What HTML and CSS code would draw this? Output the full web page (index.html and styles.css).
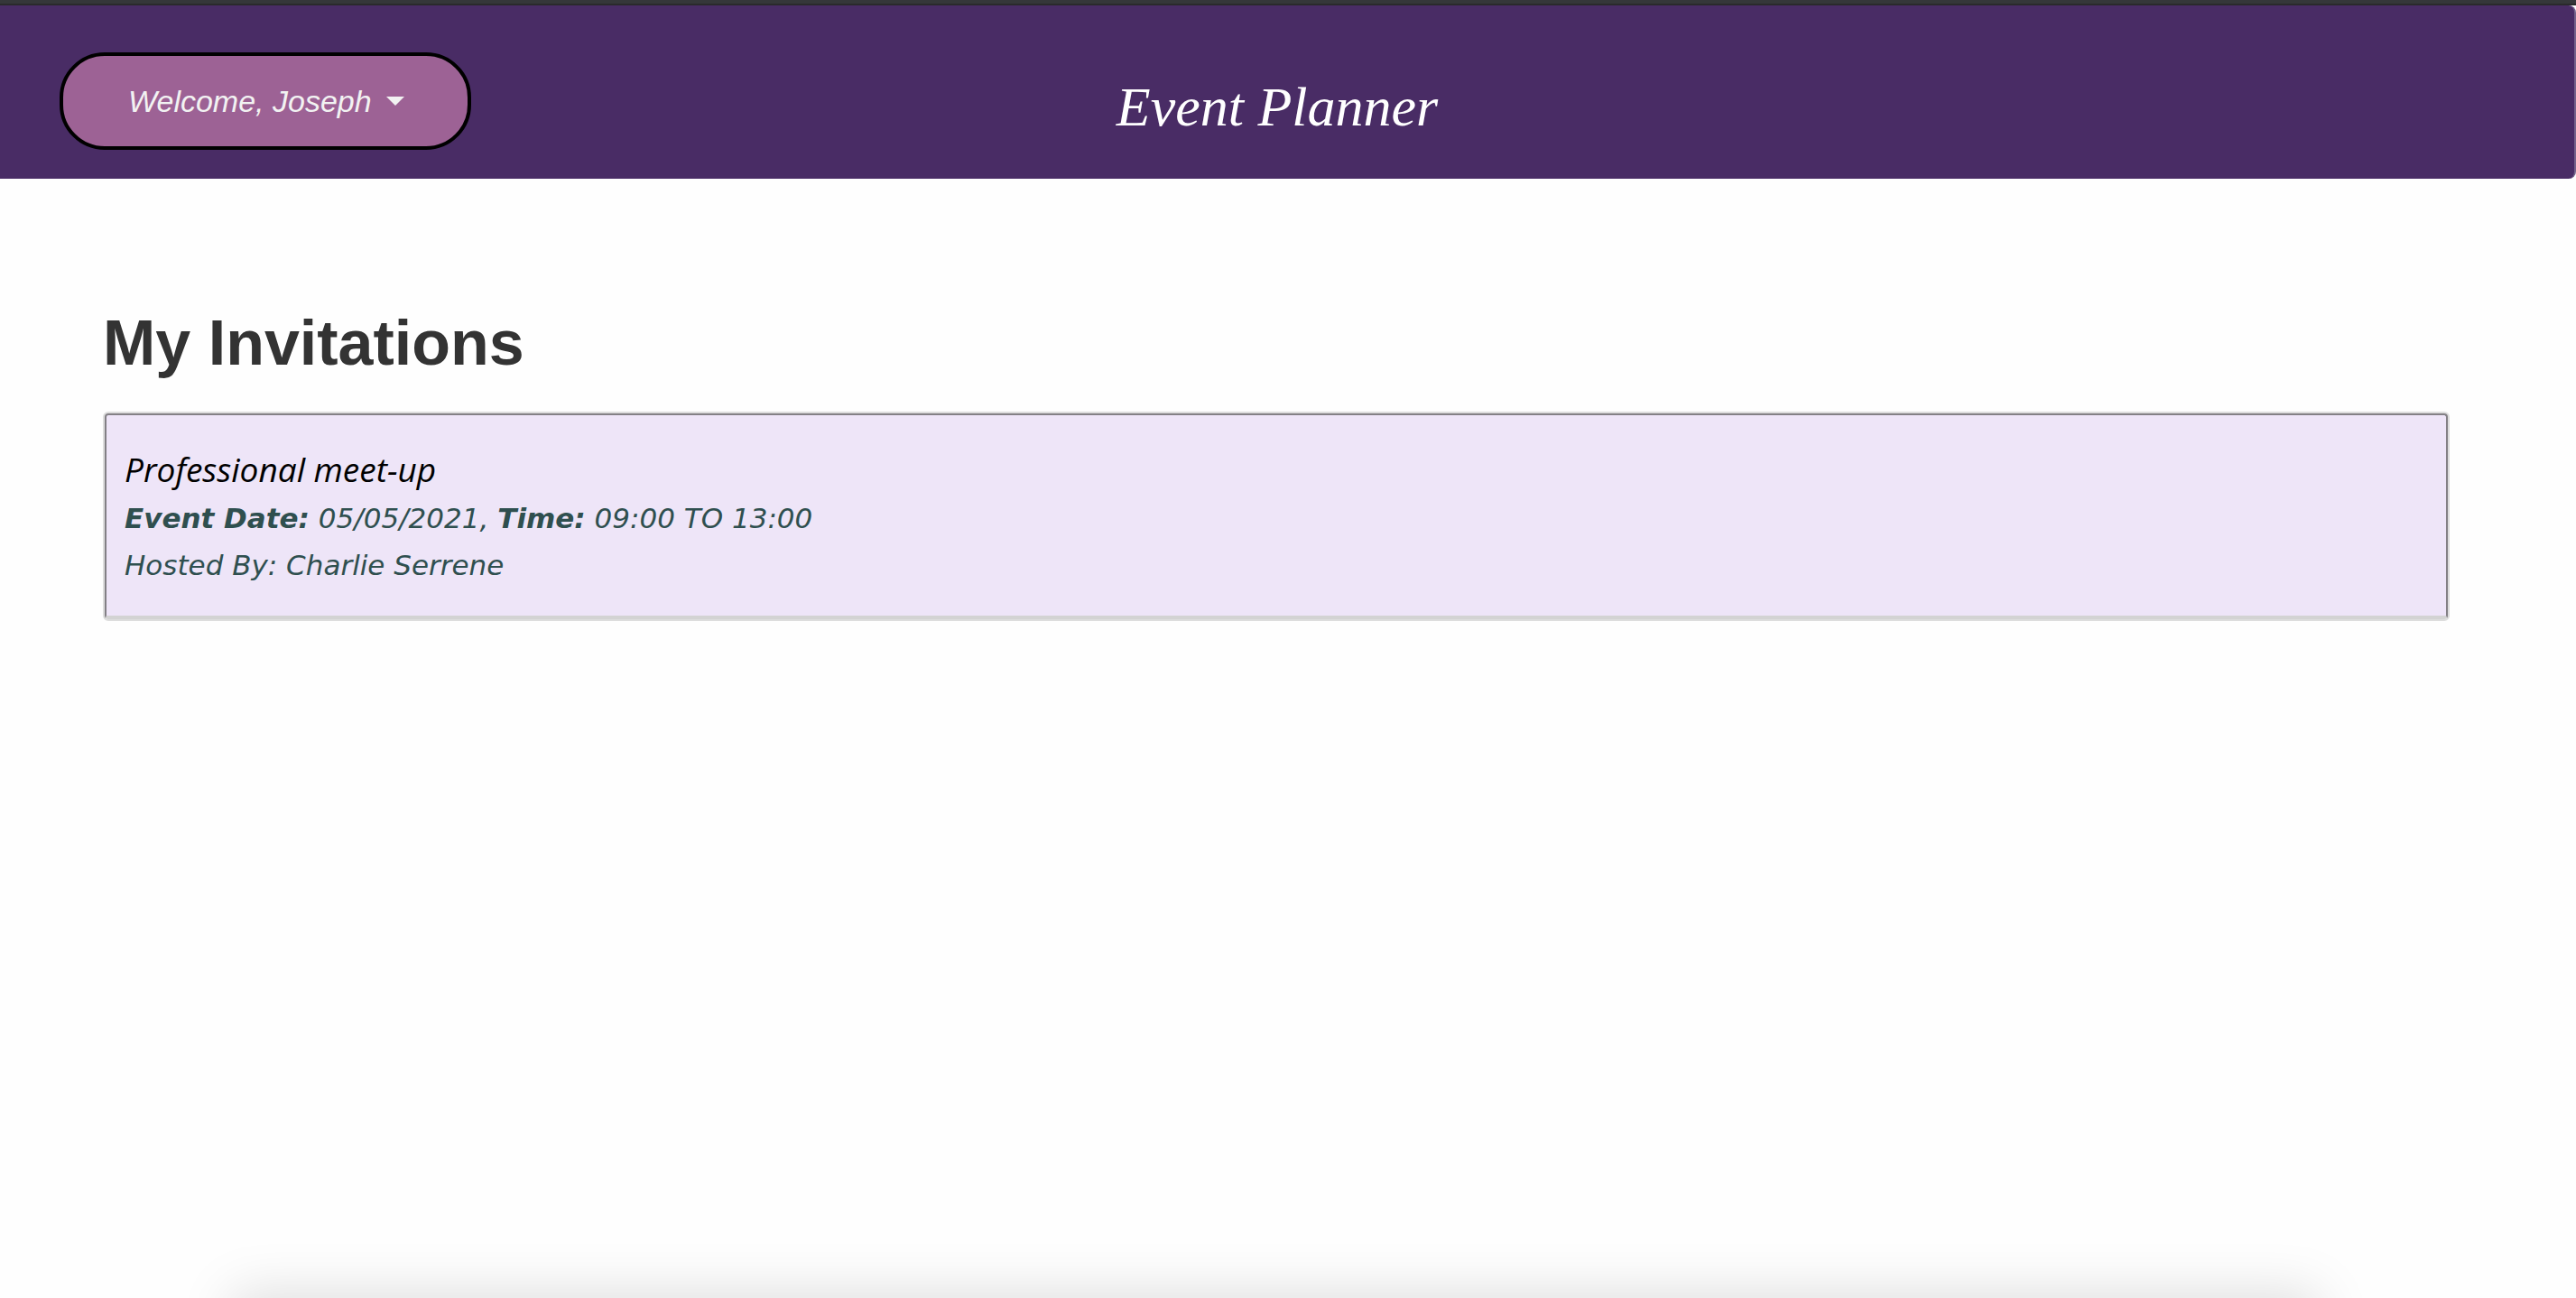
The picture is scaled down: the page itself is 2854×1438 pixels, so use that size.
FILE: index.html
```html
<!DOCTYPE html>
<html lang="en">
<head>
  <meta charset="utf-8">
  <title>Event Planner</title>
  <link rel="stylesheet" href="styles.css">
</head>
<body>
  <header class="navbar">
    <div class="navbar-start">
      <button class="user-menu" type="button" aria-haspopup="true">Welcome, Joseph <span class="caret"></span></button>
    </div>
    <a class="brand" href="#">Event Planner</a>
    <div class="navbar-end"></div>
  </header>
  <main class="content">
    <h1 class="page-title">My Invitations</h1>
    <article class="invitation">
      <div class="invitation-body">
        <h2 class="invitation-name">Professional meet-up</h2>
        <p class="invitation-detail"><strong>Event Date:</strong> 05/05/2021, <strong>Time:</strong> 09:00 TO 13:00</p>
        <p class="invitation-detail">Hosted By: Charlie Serrene</p>
      </div>
    </article>
  </main>
  <div class="bottom-shadow"></div>
</body>
</html>
```
FILE: styles.css
```css
* {
  box-sizing: border-box;
}

body {
  margin: 0;
  background: #fefefe;
  border-top: 6px solid #2a2a2b;
  font-family: "Liberation Sans", Arial, sans-serif;
}

body::before {
  content: "";
  position: absolute;
  inset: 0 0 auto;
  height: 4px;
  background: #353739;
}

.navbar {
  display: grid;
  grid-template-columns: 1fr auto 1fr;
  align-items: center;
  height: 192px;
  padding: 0 88px 0 66px;
  background: #492c65;
  border-right: 2px solid #74628a;
  border-radius: 0 8px 8px 0;
}

.user-menu {
  display: inline-flex;
  align-items: center;
  gap: 16px;
  height: 108px;
  margin-top: 20px;
  padding: 0 70px 0 72px;
  border: 4px solid #000;
  border-radius: 50px;
  background: #9d6295;
  color: #f2f2f2;
  font: italic 34px/40px "Liberation Sans", Arial, sans-serif;
}

.caret {
  border: 10px solid transparent;
  border-top-color: #f2f2f2;
  border-bottom: 0;
}

.brand {
  padding-top: 32px;
  color: #fff;
  font: italic 62px/72px "Apple Chancery", "Z003", "URW Chancery L", "Liberation Serif", serif;
  text-decoration: none;
}

.content {
  padding: 142px 140px 0 114px;
}

.page-title {
  margin: 0 0 36px;
  color: #333;
  font-size: 70px;
  line-height: 80px;
}

.invitation {
  border: 2px solid #ddd;
  border-radius: 6px;
}

.invitation-body {
  padding: 32px 20px 30px;
  border: 2px solid #838085;
  border-bottom: 4px solid #d3d3d3;
  border-radius: 4px;
  background: #eee5f8;
}

.invitation-name {
  margin: 0;
  color: #000;
  font: italic 500 37px/56px "Trebuchet MS", "Open Sans", sans-serif;
}

.invitation-detail {
  margin: 0;
  color: #2f4f4f;
  font: italic 31px/52px Verdana, "DejaVu Sans", sans-serif;
}

/* Soft shadow cast upwards from the lower edge of the window */
.bottom-shadow {
  position: fixed;
  top: 100%;
  right: 10%;
  left: 9%;
  height: 100px;
  box-shadow: 0 -6px 60px rgba(0, 0, 0, 0.13);
}
```
